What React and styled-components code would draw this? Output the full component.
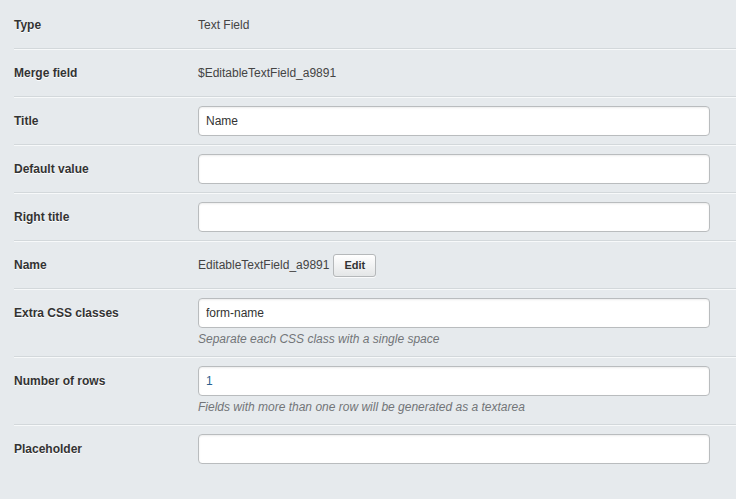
import React from 'react'
import styled, { createGlobalStyle } from 'styled-components'

const GlobalStyle = createGlobalStyle`
  html, body {
    margin: 0;
    padding: 0;
    background: #e6eaed;
  }
  body {
    font-family: "Liberation Sans", Arial, Helvetica, sans-serif;
    font-size: 12px;
    color: #444;
  }
`

const Form = styled.div`
  width: 736px;
  height: 499px;
  padding-top: 2px;
  box-sizing: border-box;
  background: #e6eaed;
  overflow: hidden;
`

const Row = styled.div`
  display: grid;
  grid-template-columns: 184px 512px;
  margin-left: 14px;
  padding: 8px 0;
  border-bottom: 1px solid #d3d8db;
  box-shadow: 0 1px 0 #f7f9fa;
  margin-bottom: 1px;

  &:last-child {
    border-bottom: 0;
    box-shadow: none;
  }
`

const Label = styled.div`
  font-weight: bold;
  font-size: 12px;
  line-height: 30px;
  color: #333;
  text-shadow: 0 1px 0 #fff;
`

const Field = styled.div`
  display: flex;
  flex-direction: column;
`

const Value = styled.div`
  display: flex;
  align-items: center;
  gap: 4px;
  height: 30px;
  font-size: 12px;
  color: #444;
`

const Input = styled.input`
  box-sizing: border-box;
  width: 512px;
  height: 30px;
  padding: 0 7px;
  border: 1px solid #b9bcbe;
  border-radius: 4px;
  background: #fff;
  box-shadow: inset 0 1px 2px rgba(0, 0, 0, 0.08);
  font-family: "Liberation Sans", Arial, Helvetica, sans-serif;
  font-size: 12px;
  color: ${props => (props.$numeric ? '#2c5f8f' : '#333')};
  outline: none;
`

const Help = styled.div`
  margin-top: 2px;
  line-height: 18px;
  font-size: 12px;
  font-style: italic;
  color: #727578;
`

const Button = styled.button`
  height: 23px;
  padding: 0 10px;
  border: 1px solid #b5b8ba;
  border-radius: 3px;
  background: linear-gradient(#ffffff, #e4e6e7);
  box-shadow: 0 1px 0 rgba(255, 255, 255, 0.8);
  font-family: "Liberation Sans", Arial, Helvetica, sans-serif;
  font-size: 11px;
  font-weight: bold;
  color: #333;
`

const rows = [
  { label: 'Type', text: 'Text Field' },
  { label: 'Merge field', text: '$EditableTextField_a9891' },
  { label: 'Title', input: 'Name' },
  { label: 'Default value', input: '' },
  { label: 'Right title', input: '' },
  { label: 'Name', text: 'EditableTextField_a9891', button: 'Edit' },
  { label: 'Extra CSS classes', input: 'form-name', help: 'Separate each CSS class with a single space' },
  { label: 'Number of rows', input: '1', numeric: true, help: 'Fields with more than one row will be generated as a textarea' },
  { label: 'Placeholder', input: '' }
]

export default function App() {
  return (
    <>
      <GlobalStyle />
      <Form>
        {rows.map(row => (
          <Row key={row.label}>
            <Label>{row.label}</Label>
            <Field>
              {row.input !== undefined ? (
                <Input defaultValue={row.input} $numeric={row.numeric} />
              ) : (
                <Value>
                  {row.text}
                  {row.button && <Button>{row.button}</Button>}
                </Value>
              )}
              {row.help && <Help>{row.help}</Help>}
            </Field>
          </Row>
        ))}
      </Form>
    </>
  )
}
